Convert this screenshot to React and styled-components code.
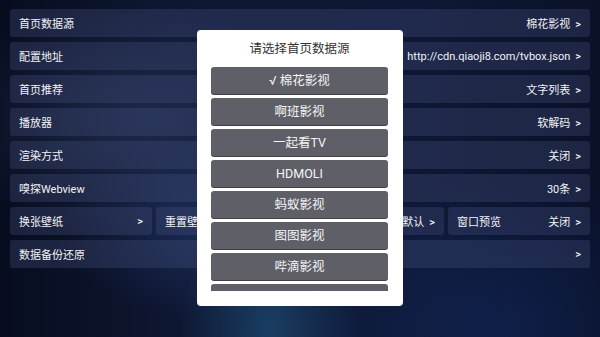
import React from "react";
import styled, { createGlobalStyle } from "styled-components";

const GlobalStyle = createGlobalStyle`
  html, body {
    margin: 0;
    padding: 0;
    width: 600px;
    height: 337px;
    overflow: hidden;
    font-family: Roboto, "Noto Sans CJK SC", "Noto Sans", sans-serif;
  }
`;

const settings = [
  { label: "首页数据源", value: "棉花影视" },
  { label: "配置地址", value: "http://cdn.qiaoji8.com/tvbox.json" },
  { label: "首页推荐", value: "文字列表" },
  { label: "播放器", value: "软解码" },
  { label: "渲染方式", value: "关闭" },
  { label: "嗅探Webview", value: "30条" },
];

const smallCells = [
  { label: "换张壁纸", value: "" },
  { label: "重置壁纸", value: "" },
  { label: "界面风格", value: "默认" },
  { label: "窗口预览", value: "关闭" },
];

const sources = ["√ 棉花影视", "啊班影视", "一起看TV", "HDMOLI", "蚂蚁影视", "图图影视", "哔滴影视", "天空影视"];

export default function App() {
  return (
    <Screen>
      <GlobalStyle />
      <List>
        {settings.map((s) => (
          <Row key={s.label}>
            <span>{s.label}</span>
            <span>
              {s.value}
              <Arrow>&gt;</Arrow>
            </span>
          </Row>
        ))}
        <Split>
          {smallCells.map((c) => (
            <Row key={c.label}>
              <span>{c.label}</span>
              <span>
                {c.value}
                <Arrow>&gt;</Arrow>
              </span>
            </Row>
          ))}
        </Split>
        <Row>
          <span>数据备份还原</span>
          <Arrow>&gt;</Arrow>
        </Row>
      </List>

      <Dialog>
        <Title>请选择首页数据源</Title>
        <Options>
          {sources.map((s) => (
            <Option key={s}>{s}</Option>
          ))}
        </Options>
      </Dialog>
    </Screen>
  );
}

const Screen = styled.div`
  position: relative;
  width: 600px;
  height: 337px;
  box-sizing: border-box;
  padding: 9px 10px;
  background:
    radial-gradient(ellipse 90px 120px at 270px 330px, rgba(40, 110, 160, 0.45), transparent),
    radial-gradient(ellipse 160px 90px at 220px 230px, rgba(50, 80, 150, 0.35), transparent),
    radial-gradient(ellipse 200px 120px at 140px 120px, rgba(60, 80, 130, 0.35), transparent),
    radial-gradient(ellipse 200px 160px at 500px 330px, rgba(20, 50, 120, 0.35), transparent),
    linear-gradient(90deg, #070d1f 0%, #0e1732 30%, #0e1835 70%, #0a1128 100%);
`;

const List = styled.div`
  display: flex;
  flex-direction: column;
  gap: 5px;
`;

const Row = styled.div`
  height: 28px;
  display: flex;
  align-items: center;
  justify-content: space-between;
  padding: 0 9px;
  border-radius: 3px;
  background: rgba(70, 82, 125, 0.32);
  color: #f2f3f6;
  font-size: 11px;
  white-space: nowrap;
  overflow: hidden;
`;

const Arrow = styled.span`
  margin-left: 5px;
  font-family: Roboto, sans-serif;
  font-weight: 500;
`;

const Split = styled.div`
  display: grid;
  grid-template-columns: repeat(4, 1fr);
  gap: 4px;
`;

const Dialog = styled.div`
  position: absolute;
  left: 197px;
  top: 30px;
  width: 206px;
  height: 276px;
  box-sizing: border-box;
  padding: 10px 15px 15px 14px;
  background: #ffffff;
  border-radius: 4px;
  display: flex;
  flex-direction: column;
`;

const Title = styled.div`
  height: 18px;
  line-height: 18px;
  margin-bottom: 9px;
  text-align: center;
  color: #333;
  font-size: 12.5px;
`;

const Options = styled.div`
  flex: 1;
  overflow: hidden;
  display: flex;
  flex-direction: column;
  gap: 4px;
`;

const Option = styled.div`
  flex: none;
  height: 27px;
  line-height: 27px;
  border-radius: 3px;
  background: #5e5f67;
  box-shadow: 0 1px 0 #3f4046;
  color: #f5f5f7;
  text-align: center;
  font-size: 12.5px;
`;
